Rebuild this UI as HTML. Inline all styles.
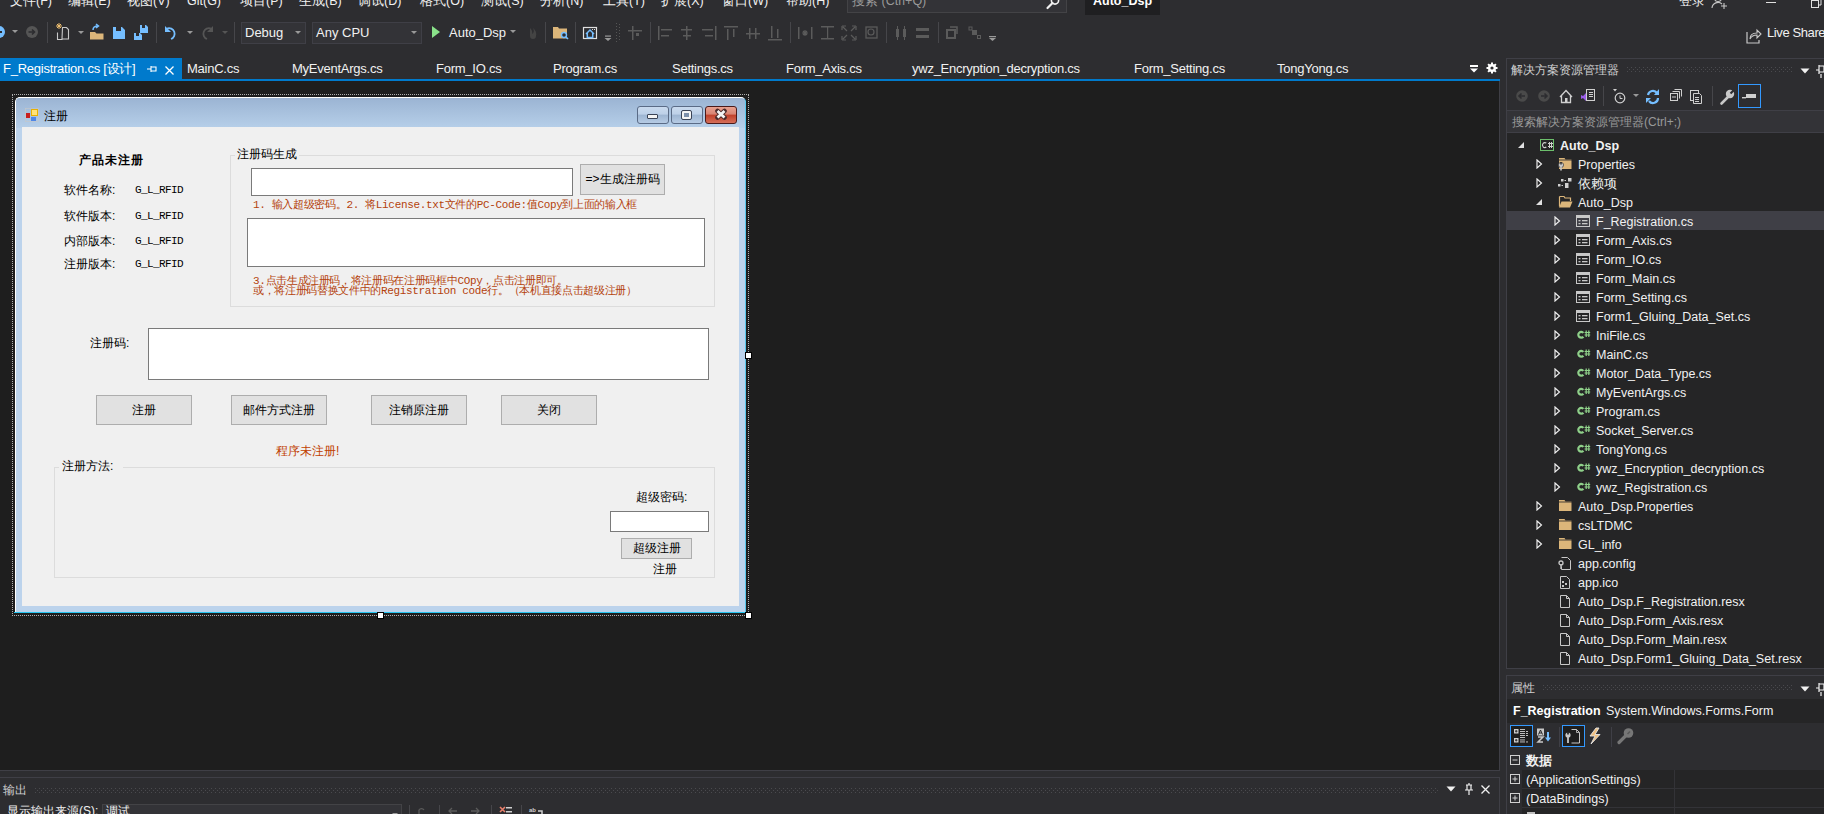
<!DOCTYPE html>
<html><head><meta charset="utf-8">
<style>
*{margin:0;padding:0;box-sizing:border-box}
html,body{width:1824px;height:814px;overflow:hidden;background:#2d2d30;font-family:"Liberation Sans",sans-serif;color:#f1f1f1}
.a{position:absolute;white-space:nowrap}
.mi{font-size:12.5px;top:-7px;line-height:16px;color:#f1f1f1}
.tb{top:22px;height:22px}
.sep{position:absolute;top:22px;width:1px;height:21px;background:#46464a}
.tab{top:61px;font-size:13px;letter-spacing:-0.25px;line-height:16px;color:#f1f1f1}
#designer{left:0;top:81px;width:1500px;height:689px;background:#1e1e1e}
.tree{font-size:12.5px;line-height:16px;color:#f1f1f1}
.lb{font-size:12px;line-height:14px;color:#000}
.mono{font-family:"Liberation Mono",monospace;font-size:11px;letter-spacing:-0.6px}
.gb{border:1px solid #dcdcdc}
.tx{background:#fff;border:1px solid #7a7a7a}
.bt{background:#e1e1e1;border:1px solid #adadad;text-align:center;font-size:12px;color:#000}
.red{font-family:"Liberation Mono",monospace;font-size:11px;line-height:12px;color:#b4420c;letter-spacing:-0.34px}
.grip{background-image:radial-gradient(circle at 1px 1px,#46464a 0.7px,transparent 0.8px);background-size:4px 3px}
</style></head><body>
<svg width="0" height="0" style="position:absolute"><defs><pattern id="gp" width="4" height="4" patternUnits="userSpaceOnUse"><rect x="0" y="0" width="1" height="1" fill="#4a4a4e"/><rect x="2" y="2" width="1" height="1" fill="#4a4a4e"/></pattern></defs></svg>

<!-- MENU BAR -->
<div class="a mi" style="left:10px">文件(F)</div>
<div class="a mi" style="left:68px">编辑(E)</div>
<div class="a mi" style="left:127px">视图(V)</div>
<div class="a mi" style="left:187px">Git(G)</div>
<div class="a mi" style="left:240px">项目(P)</div>
<div class="a mi" style="left:299px">生成(B)</div>
<div class="a mi" style="left:358px">调试(D)</div>
<div class="a mi" style="left:420px">格式(O)</div>
<div class="a mi" style="left:481px">测试(S)</div>
<div class="a mi" style="left:540px">分析(N)</div>
<div class="a mi" style="left:603px">工具(T)</div>
<div class="a mi" style="left:661px">扩展(X)</div>
<div class="a mi" style="left:722px">窗口(W)</div>
<div class="a mi" style="left:786px">帮助(H)</div>
<div class="a" style="left:847px;top:-10px;width:220px;height:23px;background:#333337;border:1px solid #434346"></div>
<div class="a mi" style="left:852px;color:#999">搜索 (Ctrl+Q)</div>
<svg class="a" style="left:1045px;top:-4px" width="16" height="14" viewBox="0 0 16 14"><circle cx="10" cy="4.5" r="3.6" fill="none" stroke="#f1f1f1" stroke-width="1.6"/><path d="M7.5 7l-5 5" stroke="#f1f1f1" stroke-width="2.2" stroke-linecap="round"/></svg>
<div class="a" style="left:1085px;top:-5px;width:75px;height:20px;background:#1f1f21"></div>
<div class="a mi" style="left:1093px;font-weight:bold;color:#fff">Auto_Dsp</div>
<div class="a mi" style="left:1679px">登录</div>


<!-- TOOLBAR -->
<svg class="a" style="left:0;top:18px" width="1010" height="30" viewBox="0 18 1010 30">
<g fill="#75beff"><circle cx="-1" cy="32" r="6"/></g>
<rect x="-4" y="31" width="6" height="2" fill="#2d2d30"/>
<path d="M12 30h6l-3 3z" fill="#999"/>
<circle cx="32" cy="32" r="6" fill="#555"/>
<path d="M28.5 32h6M32 29.5l2.5 2.5-2.5 2.5" fill="none" stroke="#2d2d30" stroke-width="1.6"/>
<rect x="47" y="22" width="1" height="21" fill="#46464a"/>
<g fill="none" stroke="#c8c8c8" stroke-width="1.1"><path d="M62.5 27.5h4l2 2v9.5h-6.5z"/><path d="M57.5 32.5v7h5"/></g>
<path d="M59 23v6M56 26h6M57 24l4 4M61 24l-4 4" stroke="#f0c070" stroke-width="1"/>
<path d="M78 31h6l-3 3z" fill="#999"/>
<path d="M90 32h5l1.5 1.5h7v6h-13.5z" fill="#dcb67a"/>
<path d="M93 30q0-4 5-4M96 24l2.5 2-2.5 2" fill="none" stroke="#75beff" stroke-width="1.5"/>
<path d="M113 27h3v4h5v-4h1l3 3v9h-12z" fill="#75beff"/>
<path d="M140 25h2v3h3v-3h1l2 2v6h-8z" fill="#75beff"/>
<path d="M134 33h2v3h3v-3h1l2 2v5h-8z" fill="#75beff"/>
<rect x="156" y="22" width="1" height="21" fill="#46464a"/>
<path d="M167 28.5a5.5 5.5 0 1 1 4 10.5" fill="none" stroke="#75beff" stroke-width="1.8"/>
<path d="M165 26v6h6z" fill="#75beff"/>
<path d="M187 31h6l-3 3z" fill="#999"/>
<path d="M211 28.5a5.5 5.5 0 1 0-4 10.5" fill="none" stroke="#555" stroke-width="1.8"/><path d="M213 26v6h-6z" fill="#555"/>
<path d="M222 31h6l-3 3z" fill="#555"/>
<rect x="234" y="22" width="1" height="21" fill="#46464a"/>
<path d="M432 26l8 6-8 6z" fill="#8ae28a"/>
<path d="M510 30h6l-3 3z" fill="#999"/>
<path d="M530 28q3 3 2 6q3-2 1-6q4 3 3 8a3 3 0 0 1-6 0q0-4 0-8z" fill="#444"/>
<rect x="545" y="22" width="1" height="21" fill="#46464a"/>
<path d="M553 27h5l1 1.5h8v10h-14z" fill="#dcb67a"/>
<circle cx="564" cy="35" r="2.5" fill="#2d2d30" stroke="#75beff" stroke-width="1.4"/><path d="M566 37l2 2" stroke="#75beff" stroke-width="1.6"/>
<rect x="575" y="22" width="1" height="21" fill="#46464a"/>
<rect x="583.5" y="27.5" width="13" height="11" fill="none" stroke="#e0e0e0" stroke-width="1.2"/>
<path d="M586 34l4-4 4 4M587.3 33v4.5h5.4V33" fill="none" stroke="#75beff" stroke-width="1.5"/><rect x="592" y="29" width="1" height="1" fill="#ddd"/><rect x="594" y="29" width="1" height="1" fill="#ddd"/>
<path d="M605 36h6M604.5 38h7l-3.5 3z" fill="#999" stroke="#999" stroke-width="0"/>
<rect x="605" y="35.5" width="6" height="1.2" fill="#999"/>
<g fill="#555"><rect x="616" y="23" width="1" height="1"/><rect x="619" y="24" width="1" height="1"/><rect x="616" y="26" width="1" height="1"/><rect x="619" y="27" width="1" height="1"/><rect x="616" y="29" width="1" height="1"/><rect x="619" y="30" width="1" height="1"/><rect x="616" y="32" width="1" height="1"/><rect x="619" y="33" width="1" height="1"/><rect x="616" y="35" width="1" height="1"/><rect x="619" y="36" width="1" height="1"/><rect x="616" y="38" width="1" height="1"/><rect x="619" y="39" width="1" height="1"/><rect x="616" y="41" width="1" height="1"/></g>
<g fill="#5b5b5b">
<rect x="628" y="30" width="14" height="1.5"/><rect x="632" y="26" width="1.5" height="14"/><rect x="636" y="33" width="3" height="3"/>
<rect x="650" y="22" width="1" height="21" fill="#46464a"/>
<rect x="658" y="26" width="1.5" height="14"/><rect x="661" y="29" width="11" height="1.5"/><rect x="661" y="35" width="8" height="1.5"/>
<rect x="686" y="26" width="1.5" height="14"/><rect x="681" y="29" width="11" height="1.5"/><rect x="683" y="35" width="8" height="1.5"/>
<rect x="715" y="26" width="1.5" height="14"/><rect x="702" y="29" width="11" height="1.5"/><rect x="705" y="35" width="8" height="1.5"/>
<rect x="724" y="26" width="14" height="1.5"/><rect x="727" y="29" width="1.5" height="11"/><rect x="733" y="29" width="1.5" height="8"/>
<rect x="746" y="33" width="14" height="1.5"/><rect x="749" y="28" width="1.5" height="11"/><rect x="755" y="28" width="1.5" height="11"/>
<rect x="768" y="39" width="14" height="1.5"/><rect x="771" y="26" width="1.5" height="12"/><rect x="777" y="29" width="1.5" height="9"/>
<rect x="790" y="22" width="1" height="21" fill="#46464a"/>
<rect x="798" y="27" width="1.5" height="12"/><rect x="811" y="27" width="1.5" height="12"/><path d="M802 33h6M805 30v6M803 31l4 4M807 31l-4 4" stroke="#5b5b5b" stroke-width="1.2"/>
<rect x="821" y="26" width="13" height="1.5"/><rect x="821" y="38" width="13" height="1.5"/><rect x="827" y="27" width="1.2" height="12"/>
<path d="M842 26h4M842 26v4M856 26h-4M856 26v4M842 40h4M842 40v-4M856 40h-4M856 40v-4M843 27l4 4M855 27l-4 4M843 39l4-4M855 39l-4-4" stroke="#5b5b5b" stroke-width="1.2" fill="none"/>
<rect x="866" y="27" width="11" height="11" fill="none" stroke="#5b5b5b" stroke-width="1.3"/><circle cx="871" cy="32" r="3" fill="#2d2d30" stroke="#5b5b5b" stroke-width="1.2"/>
<rect x="886" y="22" width="1" height="21" fill="#46464a"/>
<rect x="896" y="29" width="3" height="8"/><rect x="903" y="29" width="3" height="8"/><rect x="897" y="26" width="1" height="14"/><rect x="904" y="26" width="1" height="14"/>
<rect x="916" y="28" width="13" height="3"/><rect x="916" y="35" width="13" height="3"/>
<rect x="938" y="22" width="1" height="21" fill="#46464a"/>
<rect x="947" y="30" width="8" height="8" fill="none" stroke="#5b5b5b" stroke-width="2"/><path d="M950 27h7v7" stroke="#5b5b5b" stroke-width="1.5" fill="none"/>
<rect x="969" y="27" width="3" height="3" fill="none" stroke="#5b5b5b"/><rect x="972" y="30" width="5" height="5"/><rect x="977.5" y="35.5" width="3" height="3" fill="none" stroke="#5b5b5b"/>
</g>
<rect x="989" y="36" width="7" height="1.2" fill="#999"/><path d="M989 38h7l-3.5 3z" fill="#999"/>
</svg>
<div class="a" style="left:241px;top:22px;width:65px;height:22px;border:1px solid #3f3f46;background:#333337"></div>
<div class="a" style="left:245px;top:25px;font-size:13px;line-height:16px">Debug</div>
<svg class="a" style="left:294px;top:30px" width="8" height="5"><path d="M1 1h6l-3 3z" fill="#999"/></svg>
<div class="a" style="left:312px;top:22px;width:110px;height:22px;border:1px solid #3f3f46;background:#333337"></div>
<div class="a" style="left:316px;top:25px;font-size:13px;line-height:16px">Any CPU</div>
<svg class="a" style="left:410px;top:30px" width="8" height="5"><path d="M1 1h6l-3 3z" fill="#999"/></svg>
<div class="a" style="left:449px;top:25px;font-size:13px;line-height:16px">Auto_Dsp</div>
<svg class="a" style="left:1745px;top:26px" width="18" height="18" viewBox="0 0 18 18"><path d="M2 6v11h12v-3" fill="none" stroke="#c8c8c8" stroke-width="1.2"/><path d="M5 13q0-6 7-6v-3l4 4-4 4v-3q-5 0-7 4z" fill="none" stroke="#c8c8c8" stroke-width="1.1"/></svg>
<div class="a" style="left:1767px;top:25px;font-size:13px;letter-spacing:-0.4px;line-height:16px">Live Share</div>
<svg class="a" style="left:1710px;top:-4px" width="20" height="14" viewBox="0 0 20 14"><circle cx="8" cy="2" r="3.5" fill="none" stroke="#c8c8c8" stroke-width="1.1"/><path d="M2 12a6 6 0 0 1 10-4" fill="none" stroke="#c8c8c8" stroke-width="1.1"/><path d="M14 7v6M11 10h6" stroke="#c8c8c8" stroke-width="1.1"/></svg>
<div class="a" style="left:1766px;top:2px;width:10px;height:1px;background:#e0e0e0"></div>
<svg class="a" style="left:1810px;top:-3px" width="14" height="12"><rect x="1.5" y="3.5" width="7" height="7" fill="none" stroke="#e0e0e0"/><path d="M4 3V1h7v7h-2" fill="none" stroke="#e0e0e0"/></svg>


<!-- TABS -->
<div class="a" style="left:0;top:58px;width:182px;height:21px;background:#007acc"></div>
<div class="a" style="left:0;top:79px;width:1500px;height:2px;background:#007acc"></div>
<div class="a tab" style="left:3px;color:#fff">F_Registration.cs [设计]</div>
<svg class="a" style="left:146px;top:64px" width="12" height="10" viewBox="0 0 12 10"><path d="M1 5h4M5 2v6M5 3h5v4H5" fill="none" stroke="#fff" stroke-width="1.1"/></svg>
<svg class="a" style="left:164px;top:65px" width="11" height="11" viewBox="0 0 11 11"><path d="M1.5 1.5l8 8M9.5 1.5l-8 8" stroke="#fff" stroke-width="1.3"/></svg>
<div class="a tab" style="left:187px">MainC.cs</div>
<div class="a tab" style="left:292px">MyEventArgs.cs</div>
<div class="a tab" style="left:436px">Form_IO.cs</div>
<div class="a tab" style="left:553px">Program.cs</div>
<div class="a tab" style="left:672px">Settings.cs</div>
<div class="a tab" style="left:786px">Form_Axis.cs</div>
<div class="a tab" style="left:912px">ywz_Encryption_decryption.cs</div>
<div class="a tab" style="left:1134px">Form_Setting.cs</div>
<div class="a tab" style="left:1277px">TongYong.cs</div>
<svg class="a" style="left:1469px;top:64px" width="10" height="10" viewBox="0 0 10 10"><rect x="1" y="1" width="8" height="2" fill="#fff"/><path d="M1 4.5h8l-4 4z" fill="#fff"/></svg>
<svg class="a" style="left:1486px;top:62px" width="12" height="12" viewBox="0 0 12 12"><g fill="#fff"><circle cx="6" cy="6" r="4"/><rect x="5" y="0.5" width="2" height="11"/><rect x="0.5" y="5" width="11" height="2"/><rect x="5" y="0.5" width="2" height="11" transform="rotate(45 6 6)"/><rect x="5" y="0.5" width="2" height="11" transform="rotate(-45 6 6)"/></g><circle cx="6" cy="6" r="1.6" fill="#2d2d30"/></svg>

<div id="designer" class="a"></div>
<div class="a" style="left:1499px;top:81px;width:1px;height:689px;background:#3f3f46"></div>
<!-- FORM -->
<div class="a" style="left:12px;top:94px;width:737px;height:522px;border:1px dotted #b0b0b0"></div>
<div class="a" style="left:15px;top:97px;width:731px;height:516px;background:#bcd3ec;border-radius:5px 5px 0 0;border-top:1px solid #fff;border-left:1px solid #fff;border-right:1px solid #45c3ee;border-bottom:1px solid #26c5f0;overflow:hidden">
 <div style="position:absolute;left:0;top:0;right:0;height:30px;background:linear-gradient(#9bb4d3,#b6cfe9)"></div>
 <div style="position:absolute;left:6px;top:59px;right:6px;height:400px;background:linear-gradient(90deg,#b9d1ea,#c7daef 50%,#b9d1ea)"></div>
</div>
<div class="a" style="left:14px;top:612px;width:733px;height:1px;background:#26c5f0"></div>
<div class="a" style="left:745px;top:101px;width:1px;height:512px;background:#55c8ee"></div>
<!-- title icon -->
<svg class="a" style="left:25px;top:108px" width="14" height="14" viewBox="0 0 14 14"><rect x="0.5" y="0.5" width="13" height="13" fill="none" stroke="#c8c8c8" stroke-width="0.6"/><rect x="6" y="1" width="7" height="7" fill="#e8b000"/><rect x="7" y="2" width="5" height="5" fill="#ffe27a"/><rect x="1" y="5" width="4" height="5" fill="#c81e1e"/><rect x="6" y="9" width="5" height="4" fill="#4f86e6"/></svg>
<div class="a" style="left:44px;top:108px;font-size:12px;line-height:16px;color:#000">注册</div>
<!-- title buttons -->
<div class="a" style="left:637px;top:106px;width:32px;height:18px;border:1px solid #5a6b86;border-radius:3px;background:linear-gradient(#c9daee 0,#bdd0e8 45%,#9db5d2 50%,#b6cbe4 100%)"></div>
<div class="a" style="left:647px;top:114px;width:11px;height:5px;border:1px solid #3a4356;border-radius:1px;background:#f4f4f4"></div>
<div class="a" style="left:671px;top:106px;width:32px;height:18px;border:1px solid #5a6b86;border-radius:3px;background:linear-gradient(#c9daee 0,#bdd0e8 45%,#9db5d2 50%,#b6cbe4 100%)"></div>
<div class="a" style="left:682px;top:111px;width:9px;height:8px;border:2px solid #f4f4f4;outline:1px solid #3a4356;border-radius:1px;background:#7d90ab"></div>
<div class="a" style="left:705px;top:106px;width:32px;height:18px;border:1px solid #4a1a1a;border-radius:3px;background:linear-gradient(#e8a291 0,#d98372 45%,#c0402a 50%,#d56e58 100%)"></div>
<svg class="a" style="left:714px;top:108px" width="14" height="13" viewBox="0 0 14 13"><path d="M3.5 3l7 6.5M10.5 3l-7 6.5" stroke="#4a2a2a" stroke-width="4.6" stroke-linecap="round"/><path d="M3.5 3l7 6.5M10.5 3l-7 6.5" stroke="#f4f4f4" stroke-width="2.8" stroke-linecap="butt"/></svg>
<!-- client -->
<div class="a" style="left:22px;top:127px;width:717px;height:479px;background:#f0f0f0;color:#000;font-size:12px;line-height:14px">
</div>

<!-- client controls -->
<div class="a lb" style="left:79px;top:153px;font-weight:bold;letter-spacing:0.9px">产品未注册</div>
<div class="a lb" style="left:64px;top:183px">软件名称:</div>
<div class="a lb" style="left:64px;top:209px">软件版本:</div>
<div class="a lb" style="left:64px;top:234px">内部版本:</div>
<div class="a lb" style="left:64px;top:257px">注册版本:</div>
<div class="a lb mono" style="left:135px;top:183px">G_L_RFID</div>
<div class="a lb mono" style="left:135px;top:209px">G_L_RFID</div>
<div class="a lb mono" style="left:135px;top:234px">G_L_RFID</div>
<div class="a lb mono" style="left:135px;top:257px">G_L_RFID</div>
<div class="a gb" style="left:230px;top:155px;width:485px;height:152px"></div>
<div class="a lb" style="left:235px;top:147px;padding:0 2px;background:#f0f0f0">注册码生成</div>
<div class="a tx" style="left:251px;top:168px;width:322px;height:28px"></div>
<div class="a bt" style="left:580px;top:164px;width:85px;height:31px;line-height:29px">=&gt;生成注册码</div>
<div class="a red" style="left:253px;top:199px">1. 输入超级密码。2. 将License.txt文件的PC-Code:值Copy到上面的输入框</div>
<div class="a tx" style="left:247px;top:218px;width:458px;height:49px"></div>
<div class="a red" style="left:253px;top:275px">3.点击生成注册码，将注册码在注册码框中COpy，点击注册即可。</div>
<div class="a red" style="left:253px;top:285px">或，将注册码替换文件中的Registration code行。（本机直接点击超级注册）</div>
<div class="a lb" style="left:90px;top:336px">注册码:</div>
<div class="a tx" style="left:148px;top:328px;width:561px;height:52px"></div>
<div class="a bt" style="left:96px;top:395px;width:96px;height:30px;line-height:28px">注册</div>
<div class="a bt" style="left:231px;top:395px;width:96px;height:30px;line-height:28px">邮件方式注册</div>
<div class="a bt" style="left:371px;top:395px;width:96px;height:30px;line-height:28px">注销原注册</div>
<div class="a bt" style="left:501px;top:395px;width:96px;height:30px;line-height:28px">关闭</div>
<div class="a lb" style="left:276px;top:444px;color:#c04000">程序未注册!</div>
<div class="a gb" style="left:54px;top:467px;width:661px;height:111px"></div>
<div class="a lb" style="left:59px;top:459px;padding:0 3px;width:64px;background:#f0f0f0">注册方法:</div>
<div class="a lb" style="left:636px;top:490px">超级密码:</div>
<div class="a tx" style="left:610px;top:511px;width:99px;height:21px"></div>
<div class="a bt" style="left:621px;top:538px;width:71px;height:21px;line-height:19px">超级注册</div>
<div class="a lb" style="left:653px;top:562px">注册</div>
<!-- selection handles -->
<div class="a" style="left:745px;top:352px;width:7px;height:7px;background:#fff;border:1px solid #000"></div>
<div class="a" style="left:377px;top:612px;width:7px;height:7px;background:#fff;border:1px solid #000"></div>
<div class="a" style="left:745px;top:612px;width:7px;height:7px;background:#fff;border:1px solid #000"></div>


<!-- SOLUTION EXPLORER -->
<div class="a" style="left:1506px;top:58px;width:318px;height:611px;border:1px solid #3f3f46;border-right:none;background:#2d2d30"></div>
<div class="a" style="left:1511px;top:62px;font-size:12px;line-height:16px;color:#d0d0d0">解决方案资源管理器</div>
<svg class="a" style="left:1627px;top:67px" width="166" height="6"><rect width="166" height="6" fill="url(#gp)"/></svg>
<svg class="a" style="left:1800px;top:68px" width="10" height="6"><path d="M0.5 0.5h9l-4.5 5z" fill="#f1f1f1"/></svg>
<svg class="a" style="left:1816px;top:64px" width="8" height="14"><path d="M3 1v9M3 2h5v6H3M0 6h3M5 10v4" fill="none" stroke="#f1f1f1" stroke-width="1.2"/></svg>
<svg class="a" style="left:1506px;top:82px" width="318" height="28" viewBox="1506 82 318 28">
<circle cx="1522" cy="96" r="5.8" fill="#4a4a4a"/><path d="M1519 96h6M1521.5 93.5l-2.5 2.5 2.5 2.5" fill="none" stroke="#2d2d30" stroke-width="1.6"/>
<circle cx="1544" cy="96" r="5.8" fill="#4a4a4a"/><path d="M1541 96h6M1544.5 93.5l2.5 2.5-2.5 2.5" fill="none" stroke="#2d2d30" stroke-width="1.6"/>
<path d="M1560 97l6-6.5 6 6.5M1561.5 95.5v7h9v-7" fill="none" stroke="#d0d0d0" stroke-width="1.3"/><rect x="1565" y="98" width="2.5" height="4.5" fill="#d0d0d0"/>
<rect x="1586.5" y="89.5" width="8" height="11" fill="none" stroke="#d0d0d0"/><g fill="#d0d0d0"><rect x="1589" y="92" width="4" height="1"/><rect x="1589" y="94" width="4" height="1"/><rect x="1589" y="96" width="4" height="1"/></g><path d="M1581 95v4l2-1 3 3v-8l-3 3z" fill="#9a5de8"/>
<rect x="1603" y="86" width="1" height="20" fill="#46464a"/>
<circle cx="1620" cy="98" r="4.8" fill="none" stroke="#d0d0d0" stroke-width="1.2"/><path d="M1620 95.5v3h2.5" fill="none" stroke="#d0d0d0"/><path d="M1613 89h4l-2 2.5z" fill="#d0d0d0"/>
<path d="M1633 94h6l-3 3z" fill="#999"/>
<path d="M1648 95a5 5 0 0 1 9-2M1658 98a5 5 0 0 1-9 3" fill="none" stroke="#75beff" stroke-width="2.2"/><path d="M1659 89v6h-5z" fill="#75beff"/><path d="M1646 103v-5h5z" fill="#75beff"/>
<rect x="1670.5" y="93.5" width="7" height="7" fill="none" stroke="#d0d0d0"/><path d="M1672.5 91.5h7v7M1674.5 89.5h7v7" fill="none" stroke="#d0d0d0"/><rect x="1672" y="96.5" width="4" height="1" fill="#d0d0d0"/>
<rect x="1690.5" y="90.5" width="8" height="10" fill="none" stroke="#d0d0d0"/><path d="M1693.5 93.5h6l2 2v8h-8z" fill="#2d2d30" stroke="#d0d0d0"/><g fill="#d0d0d0"><rect x="1695" y="97" width="4" height="1"/><rect x="1695" y="99" width="4" height="1"/><rect x="1695" y="101" width="4" height="1"/></g>
<rect x="1712" y="86" width="1" height="20" fill="#46464a"/>
<path d="M1721.5 103.5l7-7" stroke="#c8c8c8" stroke-width="2.6" stroke-linecap="round"/><circle cx="1730" cy="94" r="4.2" fill="#c8c8c8"/><path d="M1730.5 93.5l4-4" stroke="#2d2d30" stroke-width="2.2"/>
<rect x="1738.5" y="84.5" width="22" height="23" fill="none" stroke="#3399ff"/><rect x="1742" y="97" width="4" height="1.4" fill="#d0d0d0"/><rect x="1746" y="94" width="10" height="4" fill="#d0d0d0"/>
</svg>
<div class="a" style="left:1507px;top:110px;width:317px;height:23px;background:#333337;border-top:1px solid #3f3f46;border-bottom:1px solid #3f3f46"></div>
<div class="a" style="left:1512px;top:114px;font-size:12px;line-height:16px;color:#999">搜索解决方案资源管理器(Ctrl+;)</div>
<div class="a" style="left:1507px;top:133px;width:317px;height:535px;background:#252526"></div>
<svg class="a" style="left:1517px;top:141px" width="8" height="8"><path d="M7 1v6H1z" fill="#e0e0e0"/></svg>
<svg class="a" style="left:1540px;top:138px" width="15" height="14" viewBox="0 0 15 14"><rect x="0.5" y="1.5" width="13" height="11" fill="#252526" stroke="#6cbf6c"/><path d="M6.3 5.2a2.3 2.5 0 1 0 0 3.8" fill="none" stroke="#d0d0d0" stroke-width="1.1"/><g fill="#d0d0d0"><rect x="9" y="4" width="1" height="6"/><rect x="11" y="4" width="1" height="6"/><rect x="8" y="5" width="5" height="1"/><rect x="8" y="8" width="5" height="1"/></g></svg>
<div class="a tree" style="left:1560px;top:138px;font-weight:bold;">Auto_Dsp</div>
<svg class="a" style="left:1536px;top:159px" width="7" height="10"><path d="M1 1l4.5 4-4.5 4z" fill="none" stroke="#f0f0f0" stroke-width="1.15"/></svg>
<svg class="a" style="left:1558px;top:157px" width="15" height="14" viewBox="0 0 15 14"><path d="M1 1h5.5l1 1.5h6v9.5h-12.5z" fill="#dcb67a"/><path d="M1 3h13" stroke="#252526" stroke-width="0.8"/><circle cx="3" cy="8" r="2.6" fill="#c8c8c8" stroke="#252526" stroke-width="0.6"/><rect x="2.3" y="5" width="1.4" height="2.5" fill="#252526"/><rect x="2.2" y="9.5" width="1.6" height="4" fill="#c8c8c8"/></svg>
<div class="a tree" style="left:1578px;top:157px;">Properties</div>
<svg class="a" style="left:1536px;top:178px" width="7" height="10"><path d="M1 1l4.5 4-4.5 4z" fill="none" stroke="#f0f0f0" stroke-width="1.15"/></svg>
<svg class="a" style="left:1558px;top:176px" width="15" height="14" viewBox="0 0 15 14"><g fill="#d0d0d0"><rect x="3" y="3" width="2.5" height="2.5"/><rect x="6.5" y="4" width="1.5" height="1"/><rect x="10" y="2" width="3.5" height="3.5"/><rect x="0" y="8" width="2.5" height="2.5"/><rect x="3.5" y="9" width="1.5" height="1"/><rect x="7" y="7" width="3.5" height="5"/></g></svg>
<div class="a tree" style="left:1578px;top:176px;">依赖项</div>
<svg class="a" style="left:1535px;top:198px" width="8" height="8"><path d="M7 1v6H1z" fill="#e0e0e0"/></svg>
<svg class="a" style="left:1558px;top:195px" width="15" height="14" viewBox="0 0 15 14"><path d="M1.5 1.5h4.5l1 1.5h5.5v3" fill="none" stroke="#dcb67a" stroke-width="1.2"/><path d="M1.5 1.5v10" stroke="#dcb67a" stroke-width="1.2"/><path d="M1 12.5l2.5-6h11l-2.5 6z" fill="#dcb67a"/></svg>
<div class="a tree" style="left:1578px;top:195px;">Auto_Dsp</div>
<div class="a" style="left:1507px;top:211px;width:317px;height:19px;background:#3f3f46"></div>
<svg class="a" style="left:1554px;top:216px" width="7" height="10"><path d="M1 1l4.5 4-4.5 4z" fill="none" stroke="#f0f0f0" stroke-width="1.15"/></svg>
<svg class="a" style="left:1576px;top:214px" width="15" height="14" viewBox="0 0 15 14"><rect x="0.5" y="1.5" width="13" height="11" fill="none" stroke="#c8c8c8"/><rect x="0.5" y="1.5" width="13" height="2.5" fill="#c8c8c8"/><g fill="#c8c8c8"><rect x="2.5" y="6" width="2" height="1.3"/><rect x="6" y="6" width="5.5" height="1.3"/><rect x="2.5" y="9" width="2" height="1.3"/><rect x="6" y="9" width="5.5" height="1.3"/></g></svg>
<div class="a tree" style="left:1596px;top:214px;">F_Registration.cs</div>
<svg class="a" style="left:1554px;top:235px" width="7" height="10"><path d="M1 1l4.5 4-4.5 4z" fill="none" stroke="#f0f0f0" stroke-width="1.15"/></svg>
<svg class="a" style="left:1576px;top:233px" width="15" height="14" viewBox="0 0 15 14"><rect x="0.5" y="1.5" width="13" height="11" fill="none" stroke="#c8c8c8"/><rect x="0.5" y="1.5" width="13" height="2.5" fill="#c8c8c8"/><g fill="#c8c8c8"><rect x="2.5" y="6" width="2" height="1.3"/><rect x="6" y="6" width="5.5" height="1.3"/><rect x="2.5" y="9" width="2" height="1.3"/><rect x="6" y="9" width="5.5" height="1.3"/></g></svg>
<div class="a tree" style="left:1596px;top:233px;">Form_Axis.cs</div>
<svg class="a" style="left:1554px;top:254px" width="7" height="10"><path d="M1 1l4.5 4-4.5 4z" fill="none" stroke="#f0f0f0" stroke-width="1.15"/></svg>
<svg class="a" style="left:1576px;top:252px" width="15" height="14" viewBox="0 0 15 14"><rect x="0.5" y="1.5" width="13" height="11" fill="none" stroke="#c8c8c8"/><rect x="0.5" y="1.5" width="13" height="2.5" fill="#c8c8c8"/><g fill="#c8c8c8"><rect x="2.5" y="6" width="2" height="1.3"/><rect x="6" y="6" width="5.5" height="1.3"/><rect x="2.5" y="9" width="2" height="1.3"/><rect x="6" y="9" width="5.5" height="1.3"/></g></svg>
<div class="a tree" style="left:1596px;top:252px;">Form_IO.cs</div>
<svg class="a" style="left:1554px;top:273px" width="7" height="10"><path d="M1 1l4.5 4-4.5 4z" fill="none" stroke="#f0f0f0" stroke-width="1.15"/></svg>
<svg class="a" style="left:1576px;top:271px" width="15" height="14" viewBox="0 0 15 14"><rect x="0.5" y="1.5" width="13" height="11" fill="none" stroke="#c8c8c8"/><rect x="0.5" y="1.5" width="13" height="2.5" fill="#c8c8c8"/><g fill="#c8c8c8"><rect x="2.5" y="6" width="2" height="1.3"/><rect x="6" y="6" width="5.5" height="1.3"/><rect x="2.5" y="9" width="2" height="1.3"/><rect x="6" y="9" width="5.5" height="1.3"/></g></svg>
<div class="a tree" style="left:1596px;top:271px;">Form_Main.cs</div>
<svg class="a" style="left:1554px;top:292px" width="7" height="10"><path d="M1 1l4.5 4-4.5 4z" fill="none" stroke="#f0f0f0" stroke-width="1.15"/></svg>
<svg class="a" style="left:1576px;top:290px" width="15" height="14" viewBox="0 0 15 14"><rect x="0.5" y="1.5" width="13" height="11" fill="none" stroke="#c8c8c8"/><rect x="0.5" y="1.5" width="13" height="2.5" fill="#c8c8c8"/><g fill="#c8c8c8"><rect x="2.5" y="6" width="2" height="1.3"/><rect x="6" y="6" width="5.5" height="1.3"/><rect x="2.5" y="9" width="2" height="1.3"/><rect x="6" y="9" width="5.5" height="1.3"/></g></svg>
<div class="a tree" style="left:1596px;top:290px;">Form_Setting.cs</div>
<svg class="a" style="left:1554px;top:311px" width="7" height="10"><path d="M1 1l4.5 4-4.5 4z" fill="none" stroke="#f0f0f0" stroke-width="1.15"/></svg>
<svg class="a" style="left:1576px;top:309px" width="15" height="14" viewBox="0 0 15 14"><rect x="0.5" y="1.5" width="13" height="11" fill="none" stroke="#c8c8c8"/><rect x="0.5" y="1.5" width="13" height="2.5" fill="#c8c8c8"/><g fill="#c8c8c8"><rect x="2.5" y="6" width="2" height="1.3"/><rect x="6" y="6" width="5.5" height="1.3"/><rect x="2.5" y="9" width="2" height="1.3"/><rect x="6" y="9" width="5.5" height="1.3"/></g></svg>
<div class="a tree" style="left:1596px;top:309px;">Form1_Gluing_Data_Set.cs</div>
<svg class="a" style="left:1554px;top:330px" width="7" height="10"><path d="M1 1l4.5 4-4.5 4z" fill="none" stroke="#f0f0f0" stroke-width="1.15"/></svg>
<svg class="a" style="left:1576px;top:328px" width="15" height="14" viewBox="0 0 15 14"><path d="M7.4 4.9a2.9 2.9 0 1 0 0 3.8" fill="none" stroke="#8fd18a" stroke-width="2.2"/><path d="M10.2 2.5v6.5M12.8 2.5v6.5M8.6 4.5h5.6M8.6 7h5.6" stroke="#8fd18a" stroke-width="1.2"/></svg>
<div class="a tree" style="left:1596px;top:328px;">IniFile.cs</div>
<svg class="a" style="left:1554px;top:349px" width="7" height="10"><path d="M1 1l4.5 4-4.5 4z" fill="none" stroke="#f0f0f0" stroke-width="1.15"/></svg>
<svg class="a" style="left:1576px;top:347px" width="15" height="14" viewBox="0 0 15 14"><path d="M7.4 4.9a2.9 2.9 0 1 0 0 3.8" fill="none" stroke="#8fd18a" stroke-width="2.2"/><path d="M10.2 2.5v6.5M12.8 2.5v6.5M8.6 4.5h5.6M8.6 7h5.6" stroke="#8fd18a" stroke-width="1.2"/></svg>
<div class="a tree" style="left:1596px;top:347px;">MainC.cs</div>
<svg class="a" style="left:1554px;top:368px" width="7" height="10"><path d="M1 1l4.5 4-4.5 4z" fill="none" stroke="#f0f0f0" stroke-width="1.15"/></svg>
<svg class="a" style="left:1576px;top:366px" width="15" height="14" viewBox="0 0 15 14"><path d="M7.4 4.9a2.9 2.9 0 1 0 0 3.8" fill="none" stroke="#8fd18a" stroke-width="2.2"/><path d="M10.2 2.5v6.5M12.8 2.5v6.5M8.6 4.5h5.6M8.6 7h5.6" stroke="#8fd18a" stroke-width="1.2"/></svg>
<div class="a tree" style="left:1596px;top:366px;">Motor_Data_Type.cs</div>
<svg class="a" style="left:1554px;top:387px" width="7" height="10"><path d="M1 1l4.5 4-4.5 4z" fill="none" stroke="#f0f0f0" stroke-width="1.15"/></svg>
<svg class="a" style="left:1576px;top:385px" width="15" height="14" viewBox="0 0 15 14"><path d="M7.4 4.9a2.9 2.9 0 1 0 0 3.8" fill="none" stroke="#8fd18a" stroke-width="2.2"/><path d="M10.2 2.5v6.5M12.8 2.5v6.5M8.6 4.5h5.6M8.6 7h5.6" stroke="#8fd18a" stroke-width="1.2"/></svg>
<div class="a tree" style="left:1596px;top:385px;">MyEventArgs.cs</div>
<svg class="a" style="left:1554px;top:406px" width="7" height="10"><path d="M1 1l4.5 4-4.5 4z" fill="none" stroke="#f0f0f0" stroke-width="1.15"/></svg>
<svg class="a" style="left:1576px;top:404px" width="15" height="14" viewBox="0 0 15 14"><path d="M7.4 4.9a2.9 2.9 0 1 0 0 3.8" fill="none" stroke="#8fd18a" stroke-width="2.2"/><path d="M10.2 2.5v6.5M12.8 2.5v6.5M8.6 4.5h5.6M8.6 7h5.6" stroke="#8fd18a" stroke-width="1.2"/></svg>
<div class="a tree" style="left:1596px;top:404px;">Program.cs</div>
<svg class="a" style="left:1554px;top:425px" width="7" height="10"><path d="M1 1l4.5 4-4.5 4z" fill="none" stroke="#f0f0f0" stroke-width="1.15"/></svg>
<svg class="a" style="left:1576px;top:423px" width="15" height="14" viewBox="0 0 15 14"><path d="M7.4 4.9a2.9 2.9 0 1 0 0 3.8" fill="none" stroke="#8fd18a" stroke-width="2.2"/><path d="M10.2 2.5v6.5M12.8 2.5v6.5M8.6 4.5h5.6M8.6 7h5.6" stroke="#8fd18a" stroke-width="1.2"/></svg>
<div class="a tree" style="left:1596px;top:423px;">Socket_Server.cs</div>
<svg class="a" style="left:1554px;top:444px" width="7" height="10"><path d="M1 1l4.5 4-4.5 4z" fill="none" stroke="#f0f0f0" stroke-width="1.15"/></svg>
<svg class="a" style="left:1576px;top:442px" width="15" height="14" viewBox="0 0 15 14"><path d="M7.4 4.9a2.9 2.9 0 1 0 0 3.8" fill="none" stroke="#8fd18a" stroke-width="2.2"/><path d="M10.2 2.5v6.5M12.8 2.5v6.5M8.6 4.5h5.6M8.6 7h5.6" stroke="#8fd18a" stroke-width="1.2"/></svg>
<div class="a tree" style="left:1596px;top:442px;">TongYong.cs</div>
<svg class="a" style="left:1554px;top:463px" width="7" height="10"><path d="M1 1l4.5 4-4.5 4z" fill="none" stroke="#f0f0f0" stroke-width="1.15"/></svg>
<svg class="a" style="left:1576px;top:461px" width="15" height="14" viewBox="0 0 15 14"><path d="M7.4 4.9a2.9 2.9 0 1 0 0 3.8" fill="none" stroke="#8fd18a" stroke-width="2.2"/><path d="M10.2 2.5v6.5M12.8 2.5v6.5M8.6 4.5h5.6M8.6 7h5.6" stroke="#8fd18a" stroke-width="1.2"/></svg>
<div class="a tree" style="left:1596px;top:461px;">ywz_Encryption_decryption.cs</div>
<svg class="a" style="left:1554px;top:482px" width="7" height="10"><path d="M1 1l4.5 4-4.5 4z" fill="none" stroke="#f0f0f0" stroke-width="1.15"/></svg>
<svg class="a" style="left:1576px;top:480px" width="15" height="14" viewBox="0 0 15 14"><path d="M7.4 4.9a2.9 2.9 0 1 0 0 3.8" fill="none" stroke="#8fd18a" stroke-width="2.2"/><path d="M10.2 2.5v6.5M12.8 2.5v6.5M8.6 4.5h5.6M8.6 7h5.6" stroke="#8fd18a" stroke-width="1.2"/></svg>
<div class="a tree" style="left:1596px;top:480px;">ywz_Registration.cs</div>
<svg class="a" style="left:1536px;top:501px" width="7" height="10"><path d="M1 1l4.5 4-4.5 4z" fill="none" stroke="#f0f0f0" stroke-width="1.15"/></svg>
<svg class="a" style="left:1558px;top:499px" width="15" height="14" viewBox="0 0 15 14"><path d="M1 1h5.5l1 1.5h6v9.5h-12.5z" fill="#dcb67a"/><path d="M1 3h13" stroke="#252526" stroke-width="0.8"/></svg>
<div class="a tree" style="left:1578px;top:499px;">Auto_Dsp.Properties</div>
<svg class="a" style="left:1536px;top:520px" width="7" height="10"><path d="M1 1l4.5 4-4.5 4z" fill="none" stroke="#f0f0f0" stroke-width="1.15"/></svg>
<svg class="a" style="left:1558px;top:518px" width="15" height="14" viewBox="0 0 15 14"><path d="M1 1h5.5l1 1.5h6v9.5h-12.5z" fill="#dcb67a"/><path d="M1 3h13" stroke="#252526" stroke-width="0.8"/></svg>
<div class="a tree" style="left:1578px;top:518px;">csLTDMC</div>
<svg class="a" style="left:1536px;top:539px" width="7" height="10"><path d="M1 1l4.5 4-4.5 4z" fill="none" stroke="#f0f0f0" stroke-width="1.15"/></svg>
<svg class="a" style="left:1558px;top:537px" width="15" height="14" viewBox="0 0 15 14"><path d="M1 1h5.5l1 1.5h6v9.5h-12.5z" fill="#dcb67a"/><path d="M1 3h13" stroke="#252526" stroke-width="0.8"/></svg>
<div class="a tree" style="left:1578px;top:537px;">GL_info</div>
<svg class="a" style="left:1558px;top:556px" width="15" height="14" viewBox="0 0 15 14"><path d="M3.5 1.5h6l3 3v9h-9v-3" fill="none" stroke="#c8c8c8"/><circle cx="3" cy="7" r="2" fill="none" stroke="#c8c8c8" stroke-width="1.3"/><rect x="2.3" y="8" width="1.4" height="5" fill="#c8c8c8"/></svg>
<div class="a tree" style="left:1578px;top:556px;">app.config</div>
<svg class="a" style="left:1558px;top:575px" width="15" height="14" viewBox="0 0 15 14"><path d="M2.5 1.5h6l3 3v9h-9z" fill="none" stroke="#c8c8c8"/><g fill="#c8c8c8"><rect x="4" y="6" width="2" height="2"/><rect x="7" y="8" width="2" height="2"/><rect x="4" y="10" width="2" height="2"/></g></svg>
<div class="a tree" style="left:1578px;top:575px;">app.ico</div>
<svg class="a" style="left:1558px;top:594px" width="15" height="14" viewBox="0 0 15 14"><path d="M2.5 1.5h6l3 3v9h-9z" fill="none" stroke="#c8c8c8"/><path d="M8.5 1.5v3h3" fill="none" stroke="#c8c8c8"/></svg>
<div class="a tree" style="left:1578px;top:594px;">Auto_Dsp.F_Registration.resx</div>
<svg class="a" style="left:1558px;top:613px" width="15" height="14" viewBox="0 0 15 14"><path d="M2.5 1.5h6l3 3v9h-9z" fill="none" stroke="#c8c8c8"/><path d="M8.5 1.5v3h3" fill="none" stroke="#c8c8c8"/></svg>
<div class="a tree" style="left:1578px;top:613px;">Auto_Dsp.Form_Axis.resx</div>
<svg class="a" style="left:1558px;top:632px" width="15" height="14" viewBox="0 0 15 14"><path d="M2.5 1.5h6l3 3v9h-9z" fill="none" stroke="#c8c8c8"/><path d="M8.5 1.5v3h3" fill="none" stroke="#c8c8c8"/></svg>
<div class="a tree" style="left:1578px;top:632px;">Auto_Dsp.Form_Main.resx</div>
<svg class="a" style="left:1558px;top:651px" width="15" height="14" viewBox="0 0 15 14"><path d="M2.5 1.5h6l3 3v9h-9z" fill="none" stroke="#c8c8c8"/><path d="M8.5 1.5v3h3" fill="none" stroke="#c8c8c8"/></svg>
<div class="a tree" style="left:1578px;top:651px;">Auto_Dsp.Form1_Gluing_Data_Set.resx</div>
<!-- PROPERTIES -->
<div class="a" style="left:1506px;top:675px;width:318px;height:139px;border:1px solid #3f3f46;border-right:none;border-bottom:none;background:#2d2d30"></div>
<div class="a" style="left:1511px;top:680px;font-size:12px;line-height:16px;color:#d0d0d0">属性</div>
<svg class="a" style="left:1543px;top:685px" width="250" height="6"><rect width="250" height="6" fill="url(#gp)"/></svg>
<svg class="a" style="left:1800px;top:686px" width="10" height="6"><path d="M0.5 0.5h9l-4.5 5z" fill="#f1f1f1"/></svg>
<svg class="a" style="left:1816px;top:682px" width="8" height="14"><path d="M3 1v9M3 2h5v6H3M0 6h3M5 10v4" fill="none" stroke="#f1f1f1" stroke-width="1.2"/></svg>
<div class="a" style="left:1507px;top:699px;width:317px;height:24px;background:#252526"></div>
<div class="a tree" style="left:1513px;top:703px;font-weight:bold;color:#fff">F_Registration</div>
<div class="a tree" style="left:1606px;top:703px">System.Windows.Forms.Form</div>
<svg class="a" style="left:1507px;top:723px" width="140" height="26" viewBox="1507 723 140 26">
<rect x="1510.5" y="725.5" width="22" height="21" fill="#1e1e1e" stroke="#3399ff"/>
<g fill="#d0d0d0"><rect x="1514" y="729" width="4.5" height="4.5"/><rect x="1514" y="738" width="4.5" height="4.5"/>
<rect x="1520" y="729" width="5" height="0.9"/><rect x="1520" y="731" width="5" height="0.9"/><rect x="1520" y="733" width="5" height="0.9"/><rect x="1520" y="735" width="5" height="0.9"/><rect x="1520" y="737" width="5" height="0.9"/>
<rect x="1526" y="731" width="2" height="0.9"/><rect x="1526" y="733" width="2" height="0.9"/><rect x="1526" y="735" width="2" height="0.9"/>
<rect x="1520" y="739.5" width="5" height="0.9"/><rect x="1520" y="741.5" width="5" height="0.9"/><rect x="1526" y="741.5" width="2" height="0.9"/></g>
<path d="M1515 731.2h2.5M1516.2 730v2.5M1515 740.2h2.5M1516.2 739v2.5" stroke="#252526" stroke-width="0.9"/>
<rect x="1537" y="728.5" width="7" height="7" fill="#c8c8c8"/><path d="M1538.5 734.5l2-4.5 2 4.5M1539.3 733h2.4" fill="none" stroke="#252526" stroke-width="1"/>
<path d="M1538 737h5l-5 5h5" fill="none" stroke="#c8c8c8" stroke-width="1.5"/>
<path d="M1548 732v7.5" stroke="#75beff" stroke-width="2"/><path d="M1545 737.5h6l-3 4z" fill="#75beff"/>
<rect x="1559" y="727" width="1" height="20" fill="#3f3f46"/>
<rect x="1562.5" y="725.5" width="22" height="21" fill="#1e1e1e" stroke="#3399ff"/>
<path d="M1571.5 729.5h5l3 3v10.5h-8" fill="none" stroke="#c8c8c8" stroke-width="1"/><path d="M1576.5 729.5v3h3" fill="none" stroke="#c8c8c8" stroke-width="0.8"/>
<path d="M1568 736v7" stroke="#c8c8c8" stroke-width="1.8"/><circle cx="1568" cy="735" r="2.6" fill="#c8c8c8"/><rect x="1567.2" y="731.5" width="1.6" height="3" fill="#1e1e1e"/>
<path d="M1596 728l-6 8h5l-4 8 9-9.5h-5l4-6.5z" fill="#f0c080" stroke="#e8e8e8" stroke-width="0.9"/>
<rect x="1611" y="727" width="1" height="20" fill="#3f3f46"/>
<path d="M1619 742.5l7-7" stroke="#777" stroke-width="3.2" stroke-linecap="round"/><circle cx="1628.5" cy="733" r="4.8" fill="#777"/><path d="M1627.5 734l2.5-2.5" stroke="#5a5a5a" stroke-width="1.6"/>
</svg>
<svg class="a" style="left:1509px;top:754px" width="12" height="12"><rect x="1.5" y="1.5" width="9" height="9" fill="none" stroke="#d0d0d0"/><rect x="3.5" y="5.5" width="5" height="1" fill="#d0d0d0"/></svg>
<div class="a tree" style="left:1526px;top:753px;font-weight:bold">数据</div>
<div class="a" style="left:1522px;top:770px;width:302px;height:44px;background:#252526"></div>
<div class="a" style="left:1522px;top:788px;width:302px;height:1px;background:#333337"></div>
<div class="a" style="left:1522px;top:807px;width:302px;height:1px;background:#333337"></div>
<div class="a" style="left:1674px;top:770px;width:1px;height:44px;background:#333337"></div>
<svg class="a" style="left:1509px;top:773px" width="12" height="12"><rect x="1.5" y="1.5" width="9" height="9" fill="none" stroke="#d0d0d0"/><rect x="3.5" y="5.5" width="5" height="1" fill="#d0d0d0"/><rect x="5.5" y="3.5" width="1" height="5" fill="#d0d0d0"/></svg>
<div class="a tree" style="left:1526px;top:772px">(ApplicationSettings)</div>
<svg class="a" style="left:1509px;top:792px" width="12" height="12"><rect x="1.5" y="1.5" width="9" height="9" fill="none" stroke="#d0d0d0"/><rect x="3.5" y="5.5" width="5" height="1" fill="#d0d0d0"/><rect x="5.5" y="3.5" width="1" height="5" fill="#d0d0d0"/></svg>
<div class="a tree" style="left:1526px;top:791px">(DataBindings)</div>
<div class="a" style="left:1527px;top:812px;width:8px;height:2px;background:#c0c0c0"></div>
<!-- OUTPUT -->
<div class="a" style="left:0;top:770px;width:1500px;height:1px;background:#3f3f46"></div>
<div class="a" style="left:0;top:777px;width:1500px;height:37px;border-top:1px solid #3f3f46;border-right:1px solid #3f3f46;background:#2d2d30"></div>
<div class="a" style="left:3px;top:782px;font-size:12px;line-height:16px;color:#d0d0d0">输出</div>
<svg class="a" style="left:35px;top:788px" width="1404" height="6"><rect width="1410" height="6" fill="url(#gp)"/></svg>
<svg class="a" style="left:1446px;top:786px" width="10" height="6"><path d="M0.5 0.5h9l-4.5 5z" fill="#f1f1f1"/></svg>
<svg class="a" style="left:1464px;top:782px" width="10" height="14"><path d="M5 1v2M2 3h6M3 3v5h4V3M1 8h8M5 8v5" fill="none" stroke="#f1f1f1" stroke-width="1.2"/></svg>
<svg class="a" style="left:1480px;top:784px" width="11" height="11"><path d="M1.5 1.5l8 8M9.5 1.5l-8 8" stroke="#f1f1f1" stroke-width="1.3"/></svg>
<div class="a" style="left:7px;top:803px;font-size:12px;line-height:16px;color:#f1f1f1">显示输出来源(S):</div>
<div class="a" style="left:102px;top:804px;width:300px;height:22px;background:#333337;border:1px solid #434346"></div>
<div class="a" style="left:106px;top:803px;font-size:12px;line-height:16px;color:#f1f1f1">调试</div>
<svg class="a" style="left:390px;top:800px" width="170" height="14" viewBox="390 800 170 14">
<path d="M392 813h6l-3 3z" fill="#999"/>
<rect x="409" y="805" width="1" height="10" fill="#46464a"/><rect x="439" y="805" width="1" height="10" fill="#46464a"/><rect x="491" y="805" width="1" height="10" fill="#46464a"/><rect x="521" y="805" width="1" height="10" fill="#46464a"/>
<path d="M419 814v-4a3 3 0 0 1 5 0" fill="none" stroke="#5b5b5b" stroke-width="1.3"/>
<path d="M449 811h8M452 808l-3 3 3 3" fill="none" stroke="#5b5b5b" stroke-width="1.3"/>
<path d="M471 811h8M476 808l3 3-3 3" fill="none" stroke="#5b5b5b" stroke-width="1.3"/>
<path d="M500 807l5 5M505 807l-5 5" stroke="#e8806c" stroke-width="1.6"/><rect x="506" y="807" width="6" height="1.5" fill="#d0d0d0"/><rect x="506" y="811" width="6" height="1.5" fill="#d0d0d0"/>
<text x="529" y="812" font-size="6" fill="#d0d0d0" font-family="Liberation Sans" font-weight="bold">ab</text><path d="M538 811h4v3" fill="none" stroke="#d0d0d0" stroke-width="1.5"/>
</svg>
</body></html>
